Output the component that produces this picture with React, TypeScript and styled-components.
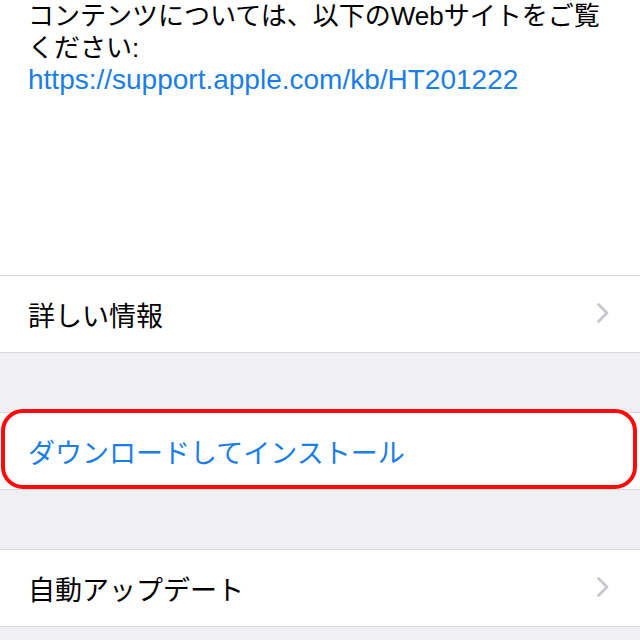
import React from 'react';
import styled, { createGlobalStyle } from 'styled-components';

const GlobalStyle = createGlobalStyle`
  html, body {
    margin: 0;
    padding: 0;
    background: #efeff4;
  }
  body {
    font-family: "Liberation Sans", "Noto Sans CJK JP", sans-serif;
    -webkit-font-smoothing: antialiased;
  }
`;

const Page = styled.div`
  width: 640px;
  height: 640px;
  overflow: hidden;
  background: #efeff4;
  display: flex;
  flex-direction: column;
`;

const InfoBlock = styled.div`
  height: 275px;
  background: #ffffff;
  padding: 0 28px;
  box-sizing: border-box;
  overflow: hidden;
`;

const Paragraph = styled.p`
  margin: 0;
  font-size: 26px;
  line-height: 32px;
  color: #000000;
`;

const Link = styled.a`
  color: #1a7ee6;
  text-decoration: none;
  font-size: 28px;
`;

const Group = styled.div<{ $gap?: boolean }>`
  position: relative;
  background: #ffffff;
  border-top: 1px solid #d9d9dd;
  border-bottom: 1px solid #d9d9dd;
  margin-top: ${(p) => (p.$gap ? '59px' : '0')};
`;

const Row = styled.div<{ $action?: boolean }>`
  height: 76px;
  display: flex;
  align-items: center;
  justify-content: space-between;
  padding: 0 28px;
  box-sizing: border-box;
  font-size: 27px;
  color: ${(p) => (p.$action ? '#1a7ee6' : '#000000')};
`;

const Chevron = styled.svg`
  width: 14px;
  height: 22px;
  margin-right: 2px;
  margin-top: -2px;
`;

const Highlight = styled.div`
  position: absolute;
  left: 1px;
  right: 3px;
  top: -4px;
  height: 80px;
  border: 4px solid #ff0a0a;
  border-radius: 22px;
  box-sizing: border-box;
  pointer-events: none;
`;

const ChevronIcon = () => (
  <Chevron viewBox="0 0 14 22">
    <path d="M2.5 2.5 L11 11 L2.5 19.5" fill="none" stroke="#c7c7cc" strokeWidth="2.8" strokeLinecap="round" strokeLinejoin="round" />
  </Chevron>
);

export default function App() {
  return (
    <Page>
      <GlobalStyle />
      <InfoBlock>
        <Paragraph>
          コンテンツについては、以下のWebサイトをご覧ください:
          <br />
          <Link href="#">https://support.apple.com/kb/HT201222</Link>
        </Paragraph>
      </InfoBlock>
      <Group>
        <Row>
          詳しい情報
          <ChevronIcon />
        </Row>
      </Group>
      <Group $gap>
        <Row $action>ダウンロードしてインストール</Row>
        <Highlight />
      </Group>
      <Group $gap>
        <Row>
          自動アップデート
          <ChevronIcon />
        </Row>
      </Group>
    </Page>
  );
}
